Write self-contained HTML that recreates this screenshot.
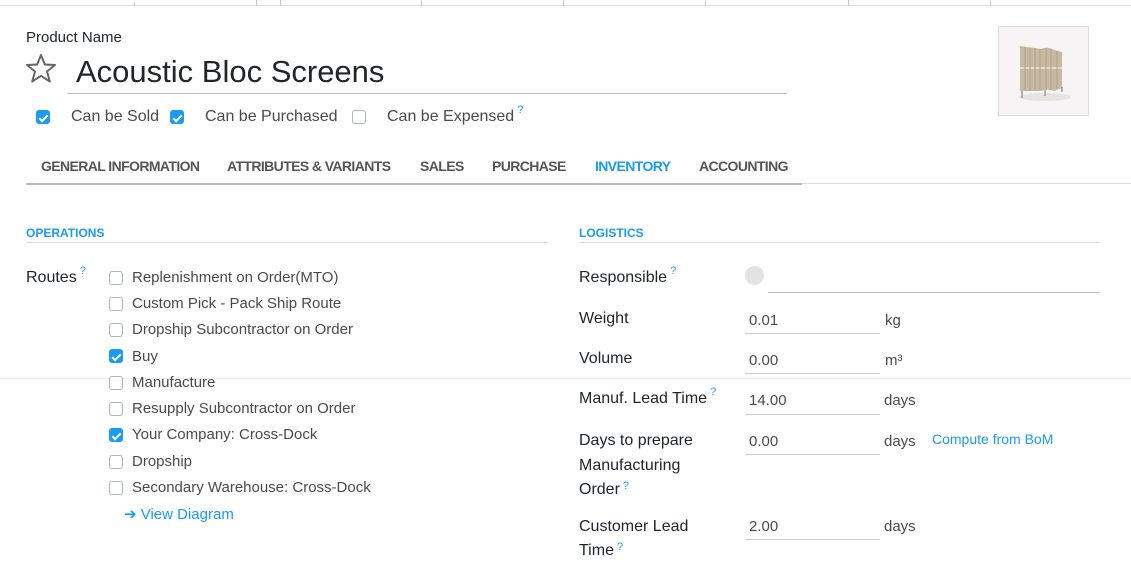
<!DOCTYPE html>
<html><head><meta charset="utf-8"><style>
*{margin:0;padding:0;box-sizing:border-box}
body{width:1131px;height:567px;overflow:hidden;background:#fff;font-family:"Liberation Sans",sans-serif;color:#4a4a4a;position:relative;font-size:15px}
.a{position:absolute;white-space:nowrap}
.vl{position:absolute;top:0;width:1px;height:6px;background:#ccc}
.cb{position:absolute;width:14px;height:14px;border:1px solid #adb5bd;border-radius:3px;background:#fff}
.cb.on{background:#1a9bf5;border-color:#1a9bf5}
.cb.on::after{content:"";position:absolute;left:4px;top:1.5px;width:3px;height:7px;border:solid #fff;border-width:0 2px 2px 0;transform:rotate(45deg)}
.q{color:#1a9bf5;font-size:11px;vertical-align:top;position:relative;top:-4px;margin-left:3px}
.lbl{color:#212529}
.tab{position:absolute;top:158px;font-size:14px;font-weight:bold;color:#555;letter-spacing:-0.6px;transform-origin:left;}
.in{position:absolute;left:745px;width:135px;border-bottom:1px solid #ccc;height:1px}
.blue{color:#1a9bf5}
.r{position:absolute;left:132px}
</style></head><body>
<div class="a" style="left:0;top:5px;width:1131px;height:1px;background:#ddd"></div>
<div class="vl" style="left:134px;height:3px;top:3px"></div>
<div class="vl" style="left:256px"></div><div class="vl" style="left:280px"></div>
<div class="vl" style="left:421px"></div><div class="vl" style="left:563px"></div>
<div class="vl" style="left:705px"></div><div class="vl" style="left:848px"></div>
<div class="vl" style="left:990px"></div>

<div class="a lbl" style="left:26px;top:29px;font-size:15px">Product Name</div>
<svg class="a" style="left:25px;top:53px" width="32" height="30" viewBox="0 0 32 30"><path d="M16 2 L19.8 11.5 L30 12 L22 18.5 L24.8 28.5 L16 22.8 L7.2 28.5 L10 18.5 L2 12 L12.2 11.5 Z" fill="none" stroke="#666" stroke-width="2" stroke-linejoin="round"/></svg>
<div class="a" style="left:76px;top:54px;font-size:31px;color:#212529">Acoustic Bloc Screens</div>
<div class="a" style="left:67px;top:93px;width:720px;height:1px;background:#bbb"></div>

<div class="cb on" style="left:36px;top:110px"></div>
<div class="a" style="left:71px;top:108px;font-size:16px">Can be Sold</div>
<div class="cb on" style="left:170px;top:110px"></div>
<div class="a" style="left:205px;top:108px;font-size:16px">Can be Purchased</div>
<div class="cb" style="left:352px;top:110px"></div>
<div class="a" style="left:387px;top:108px;font-size:16px">Can be Expensed<span class="q">?</span></div>

<div class="a" style="left:998px;top:26px;width:91px;height:90px;border:1px solid #ddd;background:#f6f4f4"></div>
<svg class="a" style="left:1010px;top:40px" width="70" height="65" viewBox="0 0 70 65">
<ellipse cx="35" cy="57" rx="26" ry="4" fill="#e6e4e2"/>
<path d="M10 6 L31 9 Q38 6 44 10 L52 12 L52 48 L44 51 Q38 48 31 51 L10 51 Z" fill="#c7b9a2"/>
<path d="M10 28 L52 28" stroke="#e3d9c8" stroke-width="2"/>
<g stroke="#b0a28a" stroke-width="1"><path d="M15 7V50M20 8V50M25 8V50M30 9V50M36 8V50M41 9V50M47 11V49"/></g>
<path d="M12 51V58M35 50V56M52 47V52" stroke="#999" stroke-width="1.5"/>
</svg>

<div class="tab" style="left:41px">GENERAL INFORMATION</div>
<div class="tab" style="left:227px">ATTRIBUTES &amp; VARIANTS</div>
<div class="tab" style="left:420px">SALES</div>
<div class="tab" style="left:492px">PURCHASE</div>
<div class="tab" style="left:595px;color:#1a9bf5">INVENTORY</div>
<div class="tab" style="left:699px">ACCOUNTING</div>
<div class="a" style="left:26px;top:183px;width:776px;height:2px;background:#bbb"></div>
<div class="a" style="left:802px;top:183px;width:329px;height:1px;background:#ddd"></div>

<div class="a blue" style="left:26px;top:226px;font-size:12px;font-weight:bold">OPERATIONS</div>
<div class="a" style="left:26px;top:242px;width:521px;height:1px;background:#ddd"></div>
<div class="a blue" style="left:579px;top:226px;font-size:12px;font-weight:bold">LOGISTICS</div>
<div class="a" style="left:579px;top:242px;width:521px;height:1px;background:#ddd"></div>

<div class="a" style="left:0;top:378px;width:1131px;height:1px;background:#eee"></div>

<div class="a lbl" style="left:26px;top:269px;font-size:16px">Routes<span class="q">?</span></div>
<div class="cb" style="left:109px;top:271px"></div><div class="a r" style="top:269px">Replenishment on Order(MTO)</div>
<div class="cb" style="left:109px;top:297px"></div><div class="a r" style="top:295px">Custom Pick - Pack Ship Route</div>
<div class="cb" style="left:109px;top:323px"></div><div class="a r" style="top:321px">Dropship Subcontractor on Order</div>
<div class="cb on" style="left:109px;top:349px"></div><div class="a r" style="top:348px">Buy</div>
<div class="cb" style="left:109px;top:376px"></div><div class="a r" style="top:374px">Manufacture</div>
<div class="cb" style="left:109px;top:402px"></div><div class="a r" style="top:400px">Resupply Subcontractor on Order</div>
<div class="cb on" style="left:109px;top:428px"></div><div class="a r" style="top:426px">Your Company: Cross-Dock</div>
<div class="cb" style="left:109px;top:455px"></div><div class="a r" style="top:453px">Dropship</div>
<div class="cb" style="left:109px;top:481px"></div><div class="a r" style="top:479px">Secondary Warehouse: Cross-Dock</div>
<div class="a blue" style="left:124px;top:505px;font-size:15px">➔ View Diagram</div>

<div class="a lbl" style="left:579px;top:269px;font-size:16px">Responsible<span class="q">?</span></div>
<div class="a" style="left:745px;top:266px;width:19px;height:19px;border-radius:50%;background:#e3e3e3"></div>
<div class="a" style="left:768px;top:292px;width:332px;height:1px;background:#bbb"></div>

<div class="a lbl" style="left:579px;top:310px;font-size:16px">Weight</div>
<div class="a" style="left:749px;top:312px">0.01</div><div class="in" style="top:333px"></div>
<div class="a" style="left:885px;top:312px">kg</div>

<div class="a lbl" style="left:579px;top:350px;font-size:16px">Volume</div>
<div class="a" style="left:749px;top:352px">0.00</div><div class="in" style="top:373px"></div>
<div class="a" style="left:885px;top:352px">m³</div>

<div class="a lbl" style="left:579px;top:390px;font-size:16px">Manuf. Lead Time<span class="q">?</span></div>
<div class="a" style="left:749px;top:392px">14.00</div><div class="in" style="top:414px"></div>
<div class="a" style="left:884px;top:392px">days</div>

<div class="a lbl" style="left:579px;top:429px;font-size:16px;line-height:24.5px">Days to prepare<br>Manufacturing<br>Order<span class="q">?</span></div>
<div class="a" style="left:749px;top:433px">0.00</div><div class="in" style="top:454px"></div>
<div class="a" style="left:884px;top:433px">days</div>
<div class="a blue" style="left:932px;top:431px;font-size:14px">Compute from BoM</div>

<div class="a lbl" style="left:579px;top:515px;font-size:16px;line-height:24px">Customer Lead<br>Time<span class="q">?</span></div>
<div class="a" style="left:749px;top:518px">2.00</div><div class="in" style="top:539px"></div>
<div class="a" style="left:884px;top:518px">days</div>
</body></html>
